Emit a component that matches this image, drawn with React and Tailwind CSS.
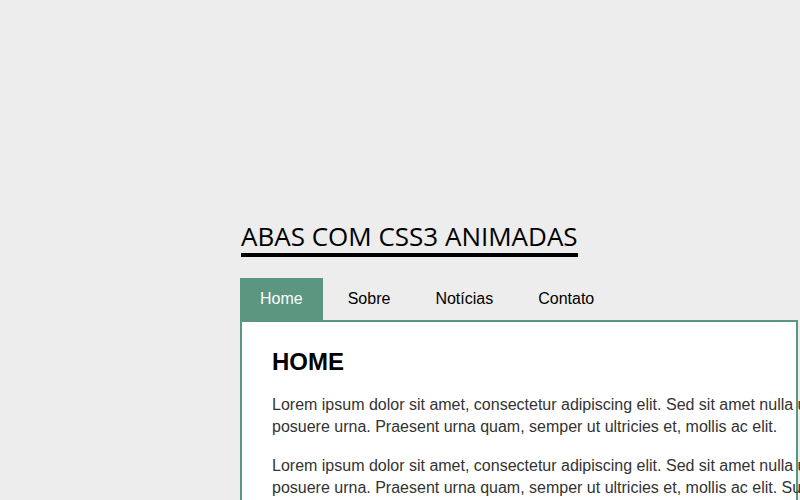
import React from "react";

const tabs = ["Home", "Sobre", "Notícias", "Contato"];

export default function App() {
  return (
    <div className="w-[800px] h-[500px] overflow-hidden bg-[#ededed] pl-[240px] pt-[219px] font-['Liberation_Sans',Arial,sans-serif]">
      <h1 className="inline-block ml-px border-b-4 border-black font-['Open_Sans',sans-serif] text-[26px] leading-[34px] font-normal text-black">
        ABAS COM CSS3 ANIMADAS
      </h1>
      <ul className="flex gap-[5px] mt-[21px]">
        {tabs.map((t, i) => (
          <li
            key={t}
            className={
              i === 0
                ? "h-[42px] px-5 flex items-center text-[16px] bg-[#5a9680] text-white"
                : "h-[42px] px-5 flex items-center text-[16px] text-black"
            }
          >
            {t}
          </li>
        ))}
      </ul>
      <div className="w-[558px] border-2 border-[#5a9680] bg-white px-[30px] pt-[24px] pb-4">
        <h2 className="text-[24px] font-bold text-black leading-[32px]">HOME</h2>
        <div className="w-[600px] text-[16px] leading-[22px] text-[#333]">
          <p className="mt-4 whitespace-nowrap">
            Lorem ipsum dolor sit amet, consectetur adipiscing elit. Sed sit amet nulla ut lectus
            <br />
            posuere urna. Praesent urna quam, semper ut ultricies et, mollis ac elit.
          </p>
          <p className="mt-[17px] whitespace-nowrap">
            Lorem ipsum dolor sit amet, consectetur adipiscing elit. Sed sit amet nulla ut lectus
            <br />
            posuere urna. Praesent urna quam, semper ut ultricies et, mollis ac elit. Suspendisse potenti.
          </p>
        </div>
      </div>
    </div>
  );
}
